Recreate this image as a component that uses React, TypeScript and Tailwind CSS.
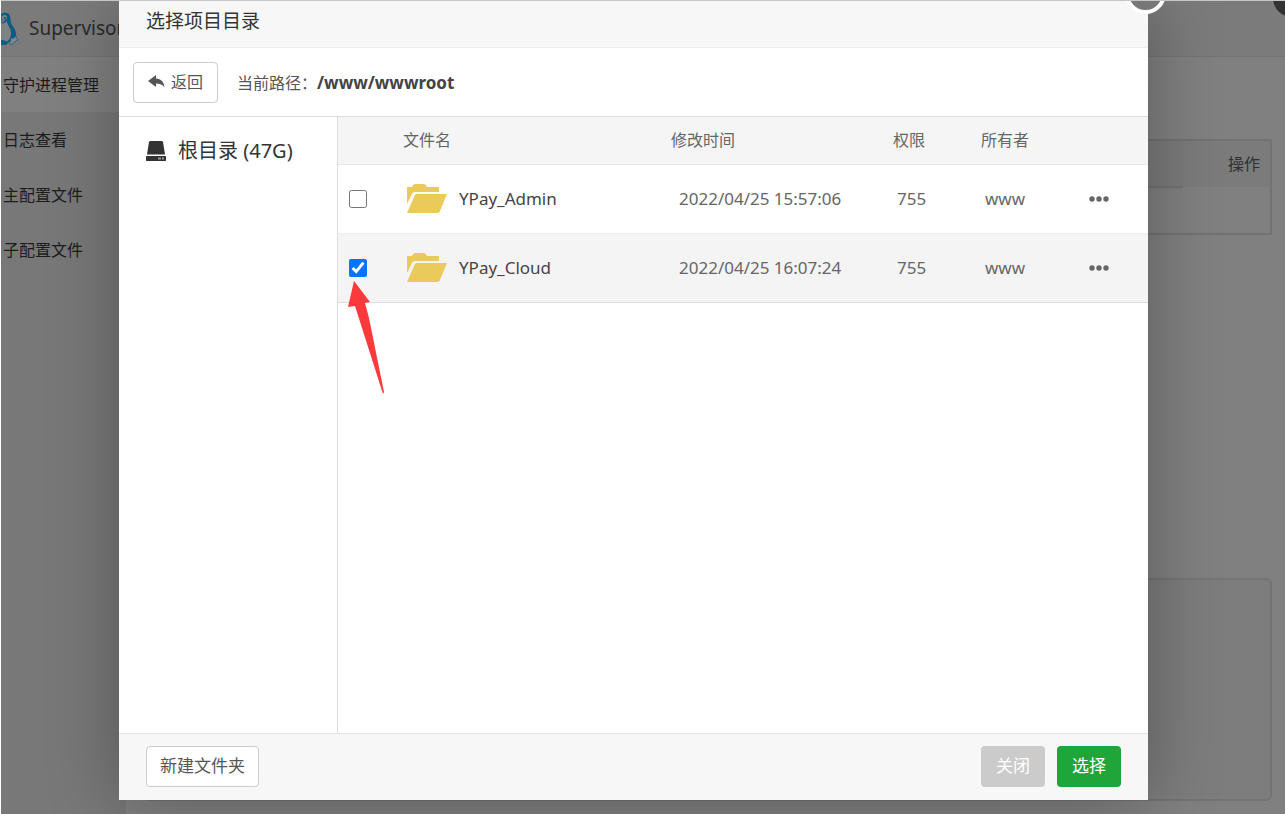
import React, { useState } from "react";

const menu = ["守护进程管理", "日志查看", "主配置文件", "子配置文件"];

const files = [
  { name: "YPay_Admin", time: "2022/04/25 15:57:06", mode: "755", owner: "www" },
  { name: "YPay_Cloud", time: "2022/04/25 16:07:24", mode: "755", owner: "www" },
];

const PenguinIcon: React.FC = () => (
  <svg viewBox="0 0 18 34" className="h-[34px] w-[18px] shrink-0" aria-hidden="true">
    <path d="M0 2C3 0 8 0 9 4c1 3 0 6 2 9 3 4 5 8 4 12l-2 3-4 2-9 3Z" fill="#0f5b84" />
    <path d="M0 11c2 1 4 0 6-2 0 4 4 7 4 12 0 4-2 8-5 9-2 1-4 0-5-1Z" fill="#7f8283" />
    <path d="M1 4c2-2 5-1 5 1s-1 3-3 3-3-2-2-4Z" fill="#7f8283" />
    <path d="M3 5h2v2H3z" fill="#0f5b84" />
    <path d="M0 8h4l-1 2-3 1Z" fill="#5d7079" />
    <path d="M0 28c3 0 6 1 7 3l-2 2H0Z" fill="#0f5b84" />
    <path d="M10 26c2 1 3 0 5-2 0 2 1 3 2 4-2 1-4 2-5 4-2 1-4 0-3-2Z" fill="#7f8a90" stroke="#2a6382" />
  </svg>
);

const ReplyIcon: React.FC = () => (
  <svg viewBox="0 0 17 14" className="h-3.5 w-[17px] shrink-0" fill="#555" aria-hidden="true">
    <path d="M0 6 8 0v3.500c5 0 8 3.500 8.500 9C14.500 9.500 12 8.500 8 8.500V12Z" />
  </svg>
);

const DiskIcon: React.FC = () => (
  <svg viewBox="0 0 20 20" className="h-5 w-5 shrink-0" fill="#333" aria-hidden="true">
    <path d="M4.500 0h11c.8 0 1.300.3 1.500 1l2 12.500H1L3 1C3.200.3 3.700 0 4.500 0Z" />
    <path d="M1 15h18c.6 0 1 .4 1 1v3c0 .6-.4 1-1 1H1c-.6 0-1-.4-1-1v-3c0-.6.4-1 1-1Z" />
    <path d="M12 16.500h3v2h-3zM16 16.500h2v2h-2z" fill="#999" />
  </svg>
);

const FolderIcon: React.FC = () => (
  <svg viewBox="0 0 40 30" className="h-[30px] w-10 shrink-0" fill="#ebca5c" aria-hidden="true">
    <path d="M0 3h5l1-2 2-1h9l2 1 1 2h12v5H9c-2 0-3 .5-4 2L0 20Z" />
    <path d="M10 10h30l-7 17c-.6 1.500-1.400 2-3 2H0L7.500 12c.6-1.500 1.200-2 2.500-2Z" />
  </svg>
);

const CrossIcon: React.FC = () => (
  <svg viewBox="0 0 16 16" className="h-4 w-4" stroke="#999" strokeWidth="2" aria-hidden="true">
    <path d="M2 2l12 12M14 2 2 14" />
  </svg>
);

const Arrow: React.FC = () => (
  <svg
    viewBox="0 0 36 114"
    className="pointer-events-none absolute left-2.5 top-[164px] h-[114px] w-9"
    aria-hidden="true"
  >
    <path d="M6 0 22 21l-5 1 4 15 15 74-1 2L7 25l-7 1Z" fill="#fc3a3c" />
  </svg>
);

const Background: React.FC = () => (
  <div className="flex flex-1 flex-col bg-[#808080]">
    <header className="flex h-14 items-center gap-2.5 overflow-hidden border-b border-[#757575] bg-[#7b7b7b] text-[19px] text-[#2a2a2a]">
      <PenguinIcon />
      <h1>Supervisor</h1>
    </header>
    <div className="flex flex-1">
      <nav className="w-[125px] shrink-0 bg-[#787878]">
        {menu.map((item, i) => (
          <a
            key={item}
            href="#"
            className={`flex h-[55px] items-center pl-0.5 text-[16px] text-[#1c1c1c] ${i === 0 ? "bg-[#808080]" : ""}`}
          >
            {item}
          </a>
        ))}
      </nav>
      <main className="flex flex-1 flex-col justify-between pb-[13px] pl-4 pr-[13px] pt-[82px]">
        <table className="w-full table-fixed border-2 border-[#727272] text-[16px] text-[#303030]">
          <thead>
            <tr className="h-[47px] bg-[#7b7b7b]">
              <th className="border-b-2 border-[#727272]"></th>
              <th className="w-[88px] pr-2.5 text-right font-normal">操作</th>
            </tr>
          </thead>
          <tbody>
            <tr className="h-[47px]">
              <td colSpan={2}></td>
            </tr>
          </tbody>
        </table>
        <div className="h-[223px] rounded-md border-2 border-[#737373] bg-[#7d7d7d]"></div>
      </main>
    </div>
  </div>
);

export default function App() {
  const [selected, setSelected] = useState("YPay_Cloud");

  return (
    <div className="relative flex min-h-screen flex-col overflow-hidden border-l border-t border-l-white border-t-[#c4c8c4] font-['Noto_Sans','Noto_Sans_CJK_SC',sans-serif]">
      <Background />

      <button
        aria-label="关闭窗口"
        className="absolute -right-[26px] -top-[22px] flex h-[38px] w-[38px] items-center justify-center rounded-full bg-[#333]"
      >
        <CrossIcon />
      </button>

      <div className="absolute inset-0 flex pb-3.5 pl-[118px] pr-[137px]">
        <section
          role="dialog"
          aria-label="选择项目目录"
          className="relative flex flex-1 flex-col bg-white text-[17px] text-[#555] shadow-[1px_1px_68px_rgba(0,0,0,0.3)]"
        >
          <button
            aria-label="关闭"
            className="absolute -right-[18px] -top-7 flex h-[41px] w-[41px] items-center justify-center rounded-full border-4 border-white bg-[#777]"
          >
            <CrossIcon />
          </button>

          <h2 className="flex h-[47px] items-center border-b border-[#eee] bg-[#f7f7f7] pb-1.5 pl-[27px] text-[19px] text-[#333]">
            选择项目目录
          </h2>

          <div className="flex h-[69px] items-center gap-[19px] border-b border-[#ddd] pl-3.5">
            <button className="flex h-[41px] items-center gap-1.5 rounded border border-[#ccc] px-3.5 text-[16px]">
              <ReplyIcon />
              返回
            </button>
            <p className="pt-0.5">
              <span className="text-[16px]">当前路径：</span>
              <b className="text-[#444]">/www/wwwroot</b>
            </p>
          </div>

          <div className="flex flex-1">
            <aside className="w-[219px] shrink-0 border-r border-[#ddd] pl-[27px] pt-[19px]">
              <a href="#" className="flex items-center gap-3 text-[20px] text-[#333]">
                <DiskIcon />
                <span>根目录 (47G)</span>
              </a>
            </aside>

            <div className="relative flex-1">
              <table className="w-full table-fixed text-left">
                <colgroup>
                  <col className="w-[65px]" />
                  <col />
                  <col className="w-[222px]" />
                  <col className="w-[88px]" />
                  <col className="w-[90px]" />
                  <col className="w-[77px]" />
                </colgroup>
                <thead>
                  <tr className="h-[47px] border-b border-[#e8e8e8] bg-[#f5f5f5] text-[16px] text-[#666]">
                    <th></th>
                    <th className="font-normal">文件名</th>
                    <th className="font-normal">修改时间</th>
                    <th className="font-normal">权限</th>
                    <th className="font-normal">所有者</th>
                    <th></th>
                  </tr>
                </thead>
                <tbody>
                  {files.map((file) => (
                    <tr
                      key={file.name}
                      className={`h-[69px] border-b text-[#666] ${
                        selected === file.name ? "border-[#ddd] bg-[#f4f4f4]" : "border-[#eee]"
                      }`}
                    >
                      <td className="pl-[11px]">
                        <input
                          type="checkbox"
                          aria-label={file.name}
                          checked={selected === file.name}
                          onChange={() => setSelected(file.name)}
                          className="block h-[18px] w-[18px]"
                        />
                      </td>
                      <td className="pl-1">
                        <div className="flex items-center gap-3 text-[#444]">
                          <FolderIcon />
                          {file.name}
                        </div>
                      </td>
                      <td className="pl-2">{file.time}</td>
                      <td className="pl-1">{file.mode}</td>
                      <td className="pl-1">{file.owner}</td>
                      <td className="pl-3.5">
                        <button aria-label="更多" className="flex h-5 w-7 items-center justify-center">
                          <svg viewBox="0 0 20 6" className="h-1.5 w-5" fill="#666" aria-hidden="true">
                            <circle cx="3" cy="3" r="2.700" />
                            <circle cx="10" cy="3" r="2.700" />
                            <circle cx="17" cy="3" r="2.700" />
                          </svg>
                        </button>
                      </td>
                    </tr>
                  ))}
                </tbody>
              </table>
              <Arrow />
            </div>
          </div>

          <footer className="flex h-[67px] items-center gap-3 border-t border-[#e4e4e4] bg-[#f7f7f7] px-[27px] pb-0.5">
            <button className="mr-auto h-[41px] rounded border border-[#ccc] bg-white px-[13px]">
              新建文件夹
            </button>
            <button className="h-[41px] rounded bg-[#cbcbcb] px-[15px] text-white">关闭</button>
            <button className="h-[41px] rounded bg-[#20a53a] px-[15px] text-white">选择</button>
          </footer>
        </section>
      </div>
    </div>
  );
}
